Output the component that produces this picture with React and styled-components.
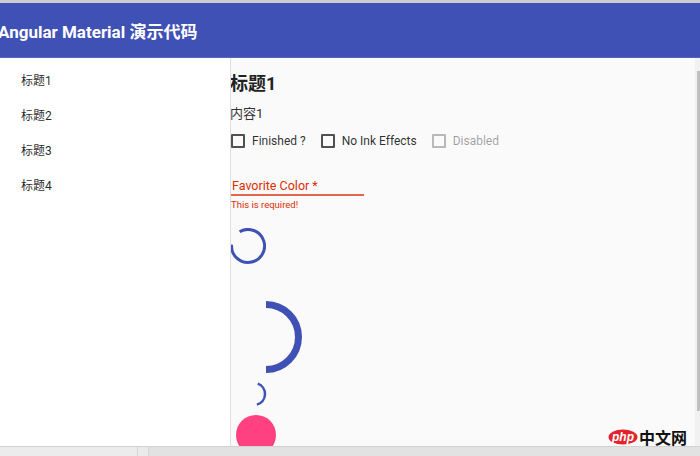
import styled, { createGlobalStyle } from "styled-components";

const GlobalStyle = createGlobalStyle`
    html, body {
        margin: 0;
        padding: 0;
        overflow: hidden;
        background: #ffffff;
        font-family: Roboto, "Noto Sans CJK SC", sans-serif;
    }
`;

const Page = styled.div`
    position: relative;
    width: 700px;
    height: 456px;
    display: flex;
    flex-direction: column;
    overflow: hidden;
`;
const TopEdge = styled.div`
    height: 3px;
    background: #cdcdcd;
`;
const Toolbar = styled.header`
    height: 54px;
    background: #3f51b5;
    color: #ffffff;
    display: flex;
    align-items: center;
    border-bottom: 1px solid #5565be;
`;
const Title = styled.h2`
    margin: 0 0 0 -2px;
    font-size: 17px;
    font-weight: 700;
    font-family: Roboto, "Noto Sans CJK SC", sans-serif;
    white-space: nowrap;
`;
const Body = styled.div`
    flex: 1;
    min-height: 0;
    display: flex;
`;
const Sidebar = styled.nav`
    width: 230px;
    flex-shrink: 0;
    background: #ffffff;
    border-right: 1px solid #dedede;
    padding-top: 4px;
    box-sizing: content-box;
`;
const NavItem = styled.div`
    height: 35px;
    display: flex;
    align-items: center;
    padding-left: 21px;
    font-size: 12px;
    color: rgba(0, 0, 0, 0.87);
`;
const Main = styled.main`
    flex: 1;
    min-width: 0;
    background: #fafafa;
    overflow: hidden;
    display: flex;
    flex-direction: column;
    align-items: flex-start;
`;
const Heading = styled.h1`
    margin: 14px 0 0 -1px;
    font-size: 18px;
    line-height: 24px;
    font-weight: 700;
    color: #222222;
    font-family: Roboto, "Noto Sans CJK SC", sans-serif;
`;
const Text = styled.p`
    margin: 9px 0 0 -1px;
    font-size: 13px;
    line-height: 18px;
    color: #333333;
`;
const CheckRow = styled.div`
    margin-top: 11px;
    height: 20px;
    display: flex;
    align-items: center;
    gap: 15px;
`;
const CheckItem = styled.label`
    display: flex;
    align-items: center;
    gap: 7px;
    font-size: 12px;
    color: ${({ $disabled }) => ($disabled ? "rgba(0,0,0,0.38)" : "rgba(0,0,0,0.82)")};
`;
const Box = styled.span`
    width: 14px;
    height: 14px;
    box-sizing: border-box;
    border: 2px solid ${({ $disabled }) => ($disabled ? "rgba(0,0,0,0.26)" : "rgba(0,0,0,0.68)")};
    border-radius: 1px;
`;
const Field = styled.div`
    margin-top: 30px;
    width: 133px;
`;
const FieldLabel = styled.div`
    font-size: 12.5px;
    line-height: 16px;
    color: #dd2c00;
    padding-left: 1px;
    border-bottom: 2px solid #e4654a;
`;
const ErrorText = styled.div`
    margin-top: 3px;
    font-size: 9.5px;
    line-height: 12px;
    color: #dd2c00;
`;
const Spinner = styled.svg`
    display: block;
    flex-shrink: 0;
    margin-top: ${({ $top }) => $top}px;
    margin-left: ${({ $left }) => $left}px;
`;
const Fab = styled.div`
    margin-top: 6px;
    margin-left: 5px;
    width: 40px;
    height: 40px;
    flex-shrink: 0;
    border-radius: 50%;
    background: #ff4081;
`;
const ScrollTrack = styled.div`
    width: 5px;
    flex-shrink: 0;
    background: #f1f1f1;
    padding-top: 13px;
`;
const ScrollThumb = styled.div`
    margin-left: 2px;
    height: 340px;
    background: #c1c1c1;
`;
const BottomBar = styled.div`
    height: 10px;
    box-sizing: border-box;
    background: #e2e2e2;
    border-top: 1px solid #d2d2d2;
    display: flex;
`;
const BottomThumb = styled.div`
    width: 137px;
    background: #ececec;
    border-right: 1px solid #d6d6d6;
`;
const BottomKnob = styled.div`
    width: 10px;
    background: #ebebeb;
    border-right: 1px solid #d6d6d6;
`;
const Watermark = styled.div`
    position: absolute;
    left: 608px;
    top: 429px;
    display: flex;
    align-items: center;
    gap: 1px;
`;
const WatermarkText = styled.span`
    font-size: 16px;
    line-height: 16px;
    font-weight: 700;
    color: #111111;
    font-family: "Noto Sans CJK SC", sans-serif;
`;

const BLUE = "#3f51b5";

const App = () => {
    const items = ["标题1", "标题2", "标题3", "标题4"];

    return (
        <Page>
            <GlobalStyle />
            <TopEdge />
            <Toolbar>
                <Title>Angular Material 演示代码</Title>
            </Toolbar>
            <Body>
                <Sidebar>
                    {items.map((item) => (
                        <NavItem key={item}>{item}</NavItem>
                    ))}
                </Sidebar>
                <Main>
                    <Heading>标题1</Heading>
                    <Text>内容1</Text>
                    <CheckRow>
                        <CheckItem><Box />Finished ?</CheckItem>
                        <CheckItem><Box />No Ink Effects</CheckItem>
                        <CheckItem $disabled><Box $disabled />Disabled</CheckItem>
                    </CheckRow>
                    <Field>
                        <FieldLabel>Favorite Color *</FieldLabel>
                        <ErrorText>This is required!</ErrorText>
                    </Field>
                    <Spinner $top={17} $left={-1} width="36" height="36" viewBox="0 0 36 36">
                        <path d="M 9.6 3.8 A 16.5 16.5 0 1 1 1.6 16.6" fill="none" stroke={BLUE} strokeWidth="3" />
                    </Spinner>
                    <Spinner $top={33} $left={-5} width="80" height="80" viewBox="0 0 80 80">
                        <path d="M 40 7.5 A 32.5 32.5 0 0 1 40 72.5" fill="none" stroke={BLUE} strokeWidth="7" />
                    </Spinner>
                    <Spinner $top={2} $left={8} width="30" height="30" viewBox="0 0 30 30">
                        <path d="M 18.76 4.66 A 11 11 0 0 1 17.85 25.63" fill="none" stroke={BLUE} strokeWidth="2.5" />
                    </Spinner>
                    <Fab />
                </Main>
                <ScrollTrack>
                    <ScrollThumb />
                </ScrollTrack>
            </Body>
            <BottomBar>
                <BottomThumb />
                <BottomKnob />
            </BottomBar>
            <Watermark>
                <svg width="30" height="16" viewBox="0 0 30 16">
                    <ellipse cx="15" cy="8" rx="14.5" ry="7.5" fill="#e3232c" />
                    <text x="15" y="12" textAnchor="middle" fill="#ffffff" fontSize="12" fontStyle="italic" fontWeight="700" fontFamily="Liberation Sans, sans-serif">php</text>
                </svg>
                <WatermarkText>中文网</WatermarkText>
            </Watermark>
        </Page>
    );
};

export default App;
